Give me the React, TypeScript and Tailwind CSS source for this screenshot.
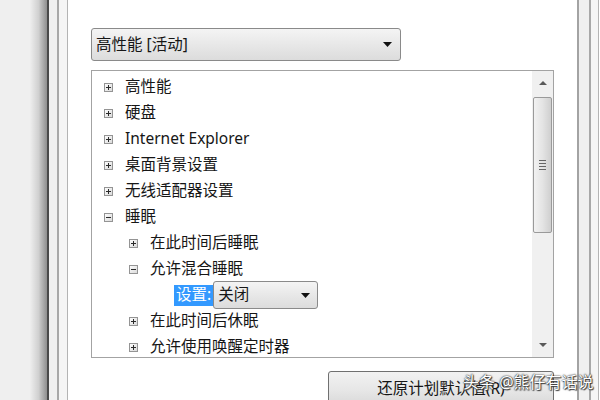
import React from "react";

function Exp({ open }: { open?: boolean }) {
  return (
    <svg width="9" height="9" viewBox="0 0 9 9" className="shrink-0">
      <defs>
        <linearGradient id="eg" x1="0" y1="0" x2="1" y2="1">
          <stop offset="0" stopColor="#ffffff" />
          <stop offset="1" stopColor="#d8d8d8" />
        </linearGradient>
      </defs>
      <rect x="0.5" y="0.5" width="8" height="8" fill="url(#eg)" stroke="#949494" />
      <path d="M2 4.5h5" stroke="#2a2a2a" strokeWidth="1" />
      {!open && <path d="M4.5 2v5" stroke="#2a2a2a" strokeWidth="1" />}
    </svg>
  );
}

function Row({ level, open, text }: { level: 1 | 2; open?: boolean; text: string }) {
  return (
    <div className={`h-[26px] flex items-center shrink-0 ${level === 1 ? "pl-[12px]" : "pl-[37px]"}`}>
      <Exp open={open} />
      <span className="ml-[12px] text-[15.5px] leading-none text-[#161616] whitespace-nowrap">{text}</span>
    </div>
  );
}

export default function App() {
  return (
    <div className="relative w-[600px] h-[400px] overflow-hidden flex bg-white font-['Noto_Sans','Noto_Sans_CJK_SC',sans-serif]">
      {/* left frame */}
      <div className="w-[30px] bg-[#efefef] shrink-0" />
      <div className="w-[17px] bg-gradient-to-r from-[#eeeeee] via-[#d0d0d0] to-[#8f8f8f] shrink-0" />
      <div className="w-[2px] bg-[#4a4a4a] shrink-0" />
      <div className="w-[8px] bg-[#f0f0f0] shrink-0" />
      <div className="w-[2px] bg-[#a8a8a8] shrink-0" />
      <div className="w-[8px] bg-[#f5f5f5] shrink-0" />
      <div className="w-[1px] bg-[#b4b4b4] shrink-0" />

      {/* main */}
      <div className="w-[509px] shrink-0 bg-white pl-[23px] pt-[28px] flex flex-col">
        {/* top dropdown */}
        <div className="w-[310px] h-[33px] shrink-0 rounded-[3px] border border-[#8a8a8a] bg-gradient-to-b from-[#f4f4f4] to-[#dcdcdc] flex items-center pl-[4px] pr-[8px]">
          <span className="text-[15.5px] leading-none text-[#161616] flex-1">高性能 [活动]</span>
          <svg width="9" height="5" viewBox="0 0 9 5"><path d="M0 0h9L4.5 5z" fill="#111" /></svg>
        </div>

        {/* tree box */}
        <div className="mt-[9px] w-[463px] h-[288px] shrink-0 border border-[#a3a3a3] flex">
          <div className="flex-1 overflow-hidden pt-[3px] flex flex-col">
            <Row level={1} text="高性能" />
            <Row level={1} text="硬盘" />
            <Row level={1} text="Internet Explorer" />
            <Row level={1} text="桌面背景设置" />
            <Row level={1} text="无线适配器设置" />
            <Row level={1} open text="睡眠" />
            <Row level={2} text="在此时间后睡眠" />
            <Row level={2} open text="允许混合睡眠" />
            <div className="h-[26px] shrink-0 flex items-center pl-[82px]">
              <span className="h-[21px] flex items-center px-[2px] bg-[#3399ff] text-white text-[15.5px] leading-none">设置:</span>
              <div className="w-[105px] h-[28px] rounded-[3px] border border-[#8a8a8a] bg-gradient-to-b from-[#f4f4f4] to-[#dcdcdc] flex items-center pl-[4px] pr-[7px]">
                <span className="text-[15.5px] leading-none text-[#161616] flex-1">关闭</span>
                <svg width="9" height="5" viewBox="0 0 9 5"><path d="M0 0h9L4.5 5z" fill="#111" /></svg>
              </div>
            </div>
            <Row level={2} text="在此时间后休眠" />
            <Row level={2} text="允许使用唤醒定时器" />
          </div>
          {/* scrollbar */}
          <div className="w-[21px] shrink-0 bg-[#f0f0f0] flex flex-col items-center">
            <div className="h-[24px] shrink-0 flex items-center justify-center">
              <svg width="8" height="4" viewBox="0 0 8 4"><path d="M0 4h8L4 0z" fill="#5a5a5a" /></svg>
            </div>
            <div className="mt-[2px] w-[19px] h-[136px] shrink-0 rounded-[2px] border border-[#9a9a9a] bg-gradient-to-r from-[#f2f2f2] via-[#e4e4e4] to-[#cfcfcf] flex flex-col items-center justify-center gap-[2px]">
              <div className="w-[7px] h-[1px] bg-[#666]" />
              <div className="w-[7px] h-[1px] bg-[#666]" />
              <div className="w-[7px] h-[1px] bg-[#666]" />
              <div className="w-[7px] h-[1px] bg-[#666]" />
            </div>
            <div className="flex-1" />
            <div className="h-[24px] shrink-0 flex items-center justify-center">
              <svg width="8" height="4" viewBox="0 0 8 4"><path d="M0 0h8L4 4z" fill="#5a5a5a" /></svg>
            </div>
          </div>
        </div>

        {/* button */}
        <div className="mt-[13px] ml-[237px] w-[226px] h-[40px] shrink-0 rounded-[3px] border border-[#707070] bg-gradient-to-b from-[#f2f2f2] via-[#e6e6e6] to-[#d4d4d4] flex justify-center pt-[6px]">
          <span className="text-[15.5px] leading-[20px] text-[#161616]">还原计划默认值(R)</span>
        </div>
      </div>

      {/* right frame */}
      <div className="w-[2px] bg-[#a3a3a3] shrink-0" />
      <div className="w-[10px] bg-[#f0f0f0] shrink-0" />
      <div className="w-[2px] bg-[#a8a8a8] shrink-0" />
      <div className="w-[7px] bg-[#f5f5f5] shrink-0" />
      <div className="w-[1px] bg-[#b4b4b4] shrink-0" />

      {/* watermark */}
      <div className="absolute left-[463px] top-[371px] text-[16px] leading-[22px] text-white [text-shadow:0_0_2px_#333,0_0_1px_#222,1px_1px_1px_#444] whitespace-nowrap">
        头条 @熊仔有话说
      </div>
    </div>
  );
}
